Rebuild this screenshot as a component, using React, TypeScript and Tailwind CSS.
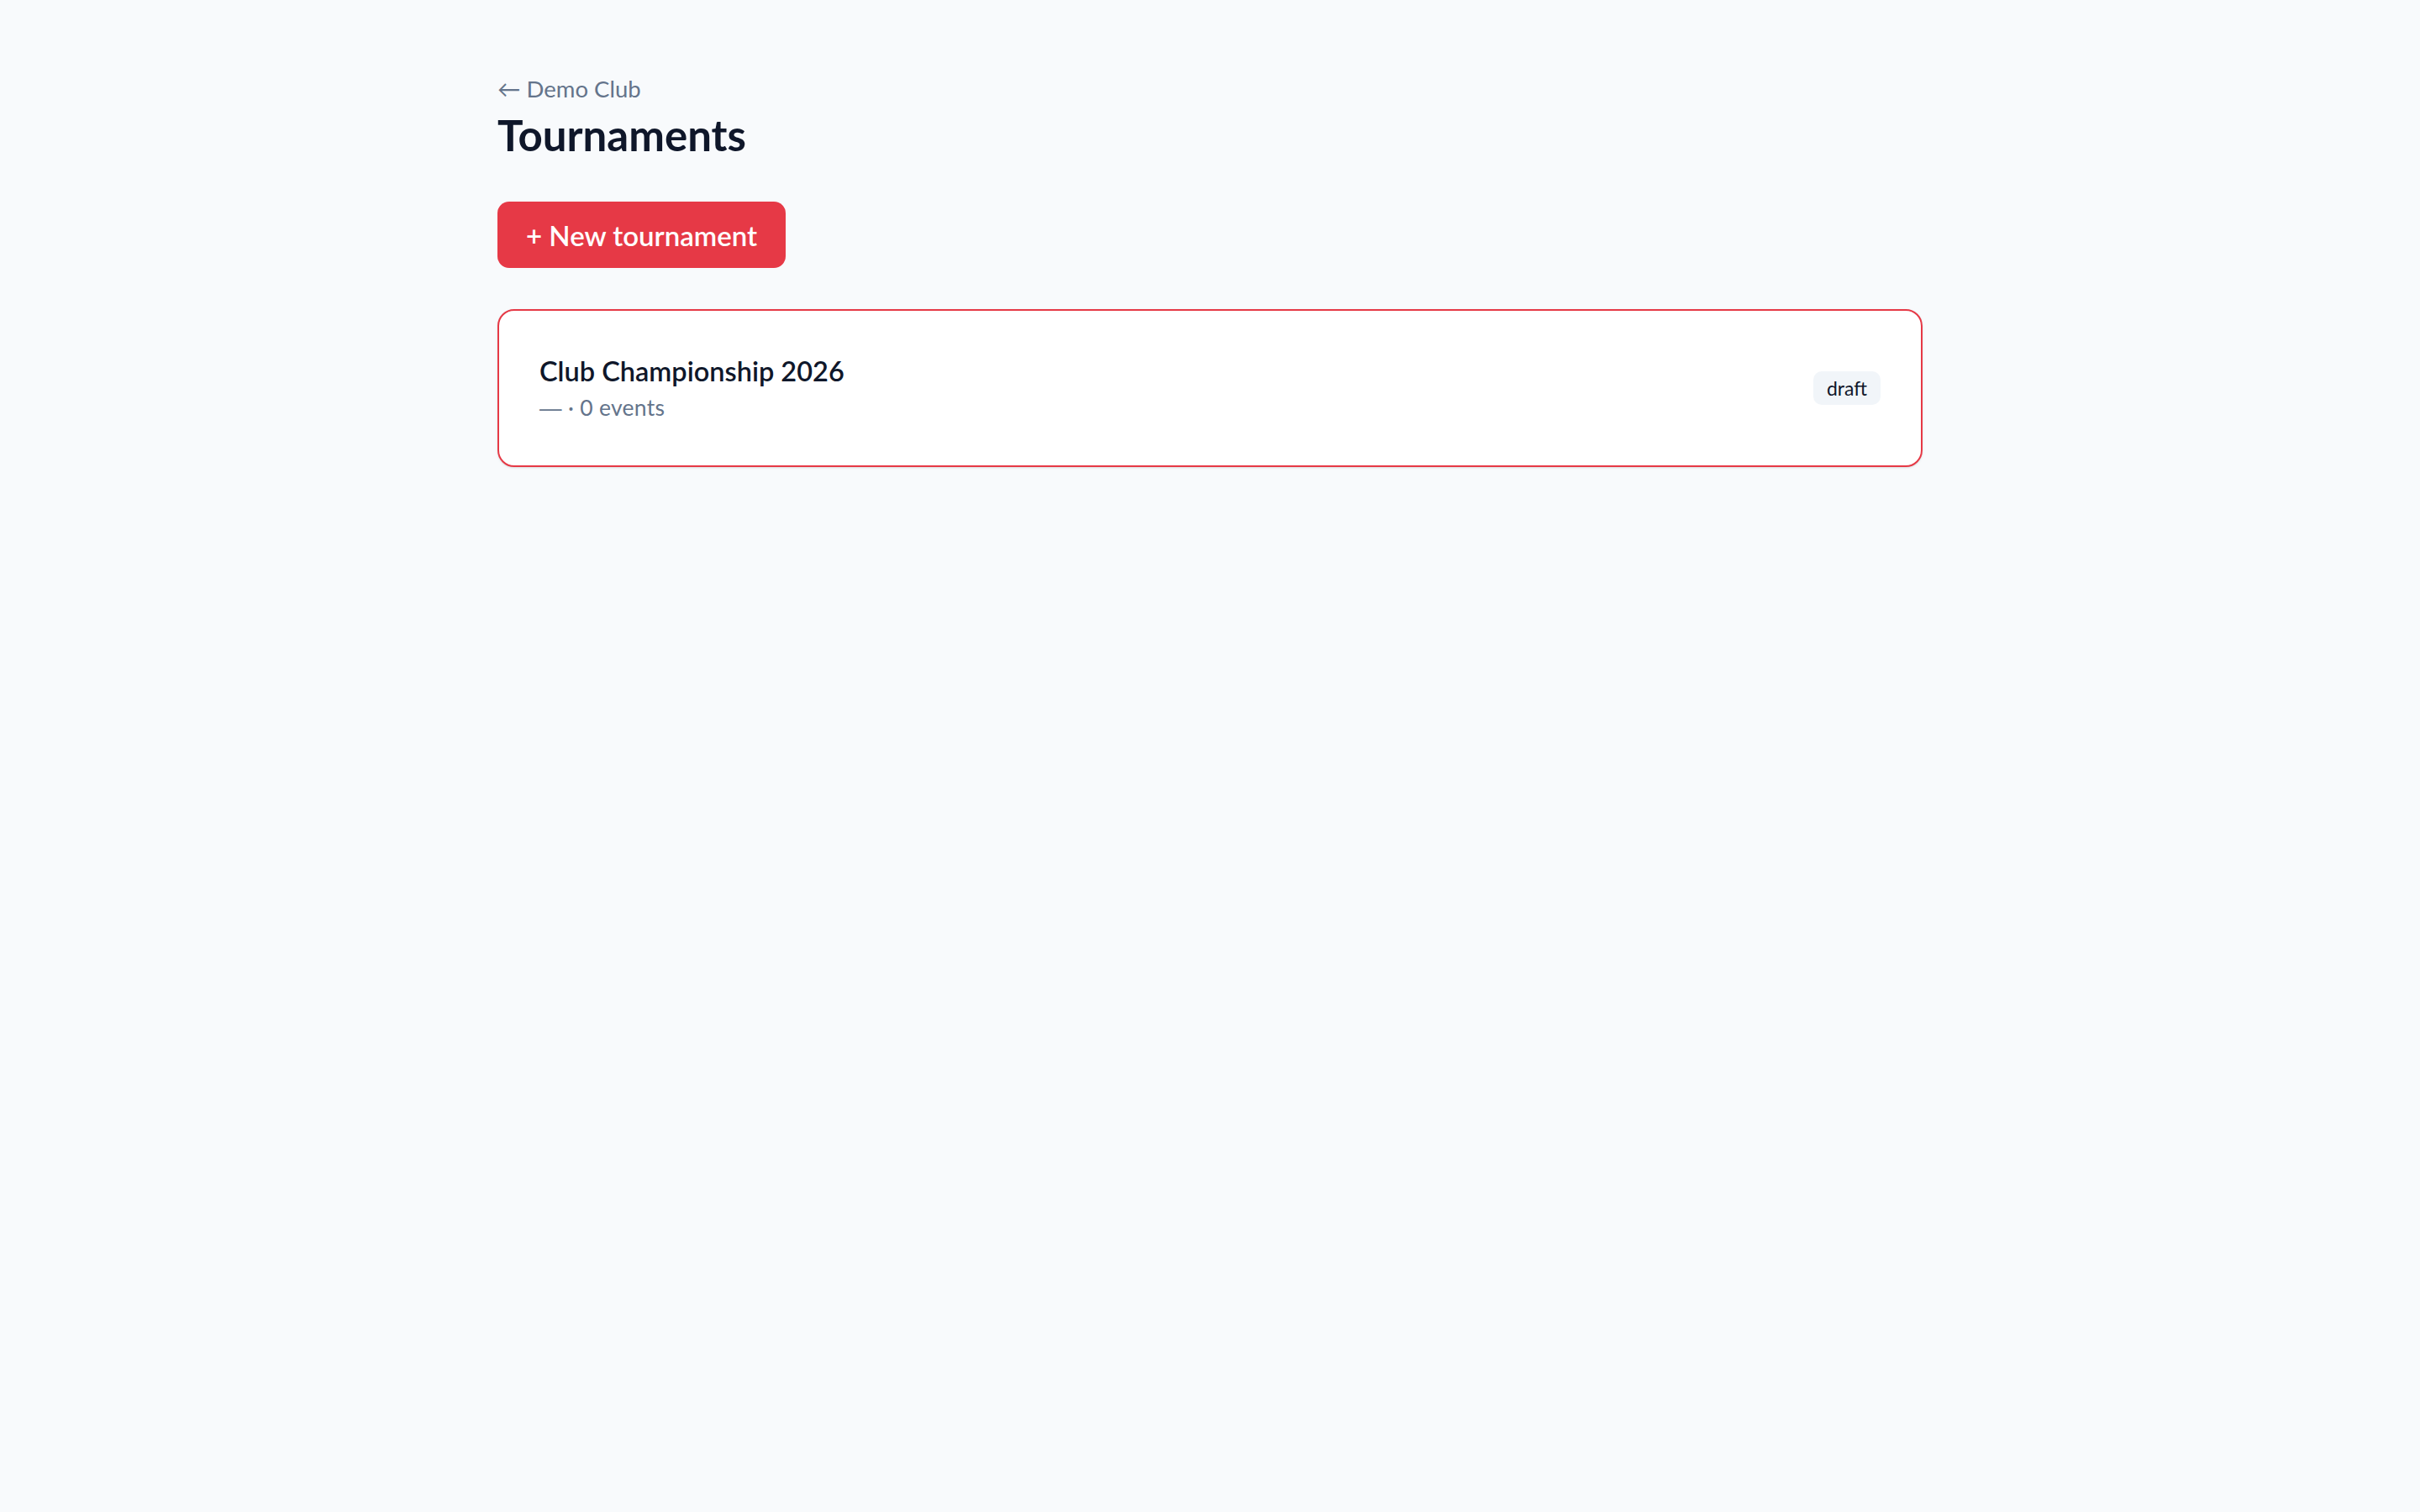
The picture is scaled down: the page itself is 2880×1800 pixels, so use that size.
import React from "react";

export default function App() {
  return (
    <div className="min-h-screen bg-[#f8fafc] font-['Lato',sans-serif]">
      <div className="mx-auto w-[1696px] pt-[86px]">
        <a className="block text-[27.5px] leading-[40px] text-[#64748b]">← Demo Club</a>
        <h1 className="mt-[5px] text-[51px] leading-[60px] font-bold text-[#0f172a]">Tournaments</h1>
        <div className="mt-[49px] flex flex-col gap-[49px]">
          <div>
            <button className="h-[79px] rounded-[14px] bg-[#e63946] px-[34px] pt-[2px] text-[33px] font-semibold text-white">
              + New tournament
            </button>
          </div>
          <div className="flex items-center justify-between rounded-[20px] border-2 border-[#e63946] bg-white px-[48px] py-[48px] shadow-sm">
            <div>
              <div className="text-[32.5px] leading-[48px] font-semibold text-[#0f172a]">Club Championship 2026</div>
              <div className="text-[26.5px] leading-[39px] text-[#64748b] tracking-[0.3px]">
                <span className="font-['Liberation_Sans',sans-serif] font-light">—</span> · 0 events
              </div>
            </div>
            <span className="flex h-[40px] items-center rounded-[10px] bg-[#f1f5f9] px-[16px] text-[23px] text-[#0f172a]">
              draft
            </span>
          </div>
        </div>
      </div>
    </div>
  );
}
